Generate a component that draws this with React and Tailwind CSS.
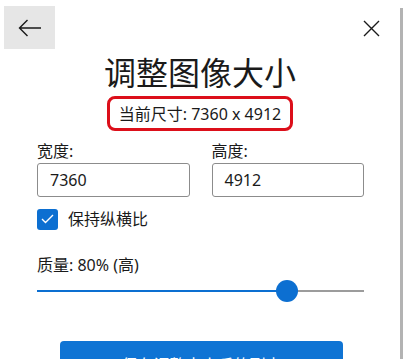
import React from "react";

const font = { fontFamily: '"Noto Sans", "Noto Sans CJK SC", sans-serif' };

export default function App() {
  return (
    <div className="flex h-[359px] w-[403px] overflow-hidden bg-white text-[#1a1a1a]" style={font}>
      <div className="w-[400px] shrink-0">
        <div className="flex items-start justify-between pl-[4px] pr-[20px] pt-[6px]">
          <button className="flex h-[43px] w-[51px] items-center justify-center bg-[#e6e6e6]">
            <svg width="24" height="18" viewBox="0 0 24 18" fill="none" stroke="#1a1a1a" strokeWidth="1.4">
              <path d="M23 9H1.5M9.5 1L1.5 9L9.5 17" />
            </svg>
          </button>
          <button className="mt-[13px] flex h-[18px] w-[18px] items-center justify-center">
            <svg width="17" height="17" viewBox="0 0 17 17" fill="none" stroke="#1a1a1a" strokeWidth="1.4">
              <path d="M1 1L16 16M16 1L1 16" />
            </svg>
          </button>
        </div>
        <h1 className="mt-[3px] text-center text-[32px] leading-[42px] font-normal">调整图像大小</h1>
        <div className="mt-[2px] flex justify-center">
          <div className="flex h-[35px] items-center rounded-[8px] border-[3px] border-[#dc0f1a] px-[9px] text-[16px] leading-[20px]">
            当前尺寸: 7360 x 4912
          </div>
        </div>
        <div className="mt-[9px] grid grid-cols-2 gap-[22px] pl-[37px] pr-[36px]">
          <div className="flex flex-col">
            <label className="text-[16px] leading-[22px]">宽度:</label>
            <div className="mt-[1px] flex h-[34px] items-center rounded-[3px] border border-[#8c8c8c] px-[12px] text-[16px]">7360</div>
          </div>
          <div className="flex flex-col">
            <label className="text-[16px] leading-[22px]">高度:</label>
            <div className="mt-[1px] flex h-[34px] items-center rounded-[3px] border border-[#8c8c8c] px-[12px] text-[16px]">4912</div>
          </div>
        </div>
        <div className="mt-[11px] flex items-center gap-[10px] pl-[37px]">
          <div className="flex h-[21px] w-[21px] items-center justify-center rounded-[3px] bg-[#0c6fd1]">
            <svg width="13" height="10" viewBox="0 0 13 10" fill="none" stroke="white" strokeWidth="1.4">
              <path d="M1 5L4.5 8.5L12 1" />
            </svg>
          </div>
          <span className="text-[16px] leading-[22px]">保持纵横比</span>
        </div>
        <div className="mt-[24px] pl-[37px] text-[16px] leading-[22px]">质量: 80% (高)</div>
        <div className="relative mt-[4px] ml-[37px] mr-[36px] h-[22px]">
          <div className="flex pt-[10px]">
            <div className="h-[2px] w-[250px] bg-[#0c6fd1]" />
            <div className="h-[2px] flex-1 bg-[#9c9c9c]" />
          </div>
          <div className="absolute left-[239px] top-0 h-[22px] w-[22px] rounded-full bg-[#0c6fd1]" />
        </div>
        <div className="mt-[39px] flex pl-[60px]">
          <button className="h-[40px] w-[283px] rounded-[4px] bg-[#0f74d4] pt-[7px] text-center text-[16px] leading-[22px] text-white">
            保存调整大小后的副本
          </button>
        </div>
      </div>
      <div className="mt-[8px] w-[3px] bg-[#b3b3b3]" />
    </div>
  );
}
